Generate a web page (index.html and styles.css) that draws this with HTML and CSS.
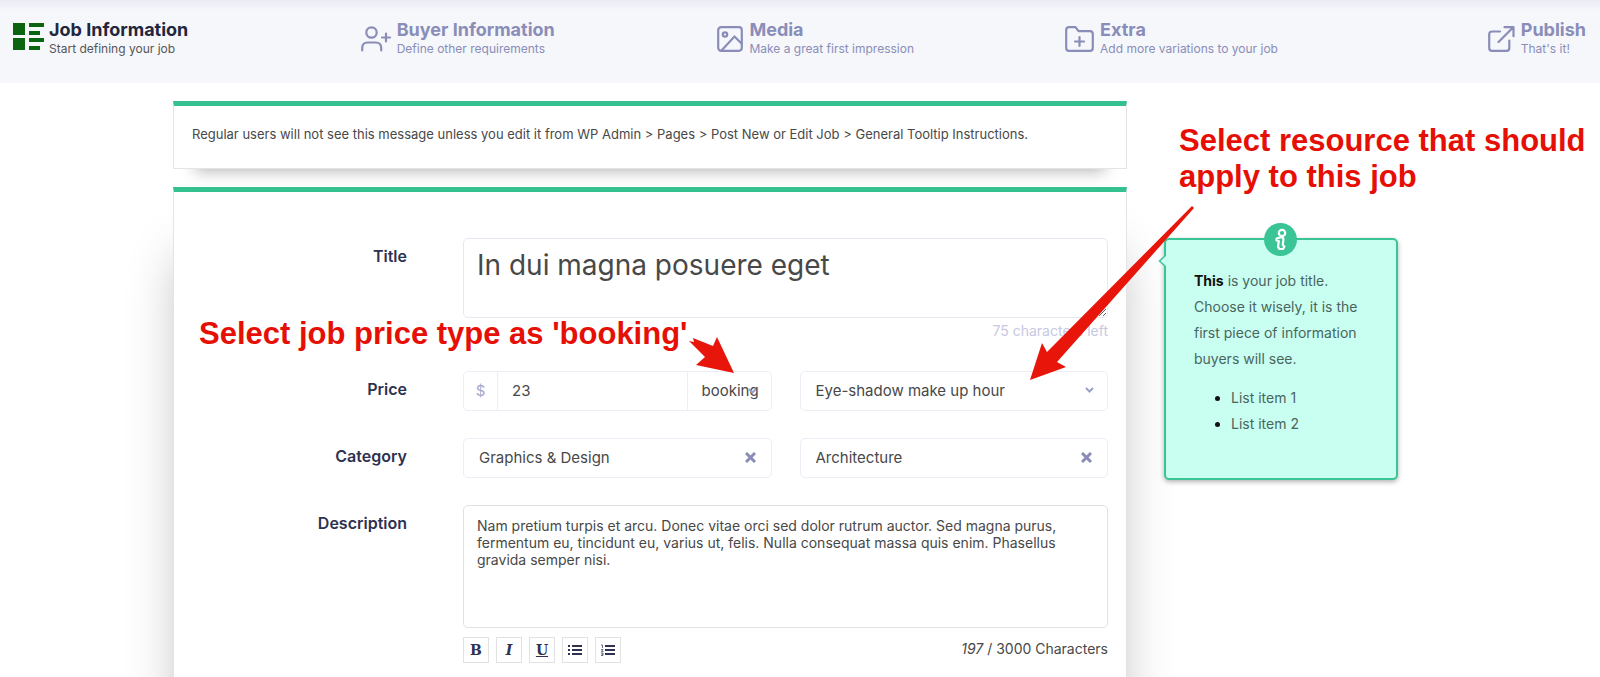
FILE: index.html
```html
<!DOCTYPE html>
<html lang="en">
<head>
<meta charset="utf-8">
<title>Post New Job</title>
<link rel="stylesheet" href="styles.css">
</head>
<body>
<header class="steps">
  <a class="step step-active" href="#job">
    <svg class="step-icon" width="31" height="27" viewBox="0 0 31 27" fill="#0b6410"><path d="M0 0h12v12H0zM0 15h12v12H0zM16 0h15v4H16zM16 8h11v4H16zM16 15h15v4H16zM16 23h11v4H16z"/></svg>
    <span class="step-text"><strong class="step-title">Job Information</strong><span class="step-sub">Start defining your job</span></span>
  </a>
  <a class="step" href="#buyer">
    <svg class="step-icon" width="30" height="26" viewBox="0 0 30 26" fill="none" stroke="#8a8db8" stroke-width="2.2" stroke-linecap="round"><circle cx="10.500" cy="6.500" r="5.200"/><path d="M1.200 24.500v-2.500q0-5.500 5.500-5.500h8q5.500 0 5.500 5.500v2.500M25 7.500v8M21 11.500h8"/></svg>
    <span class="step-text"><strong class="step-title">Buyer Information</strong><span class="step-sub">Define other requirements</span></span>
  </a>
  <a class="step" href="#media">
    <svg class="step-icon" width="26" height="26" viewBox="0 0 26 26" fill="none" stroke="#8a8db8" stroke-width="2.200" stroke-linecap="round" stroke-linejoin="round"><rect x="1.200" y="1.200" width="23.600" height="23.600" rx="3"/><circle cx="8" cy="8.500" r="2.200"/><path d="M4.500 24.500 17.500 10.500l7 7"/></svg>
    <span class="step-text"><strong class="step-title">Media</strong><span class="step-sub">Make a great first impression</span></span>
  </a>
  <a class="step" href="#extra">
    <svg class="step-icon" width="29" height="26" viewBox="0 0 29 26" fill="none" stroke="#8a8db8" stroke-width="2.200" stroke-linecap="round" stroke-linejoin="round"><path d="M1.200 22V4q0-2.800 2.800-2.800h6.500l3 4H25q2.800 0 2.800 2.800v14q0 2.800-2.800 2.800H4q-2.800 0-2.800-2.800zM14.500 11v9M10 15.500h9"/></svg>
    <span class="step-text"><strong class="step-title">Extra</strong><span class="step-sub">Add more variations to your job</span></span>
  </a>
  <a class="step" href="#publish">
    <svg class="step-icon" width="27" height="26" viewBox="0 0 27 26" fill="none" stroke="#8a8db8" stroke-width="2.200" stroke-linecap="round" stroke-linejoin="round"><path d="M12 5.500H4q-2.800 0-2.800 2.800V22q0 2.800 2.800 2.800h14.500q2.800 0 2.800-2.800v-7.500M10.500 16 25 1.500M16.500 1.200h9v9"/></svg>
    <span class="step-text"><strong class="step-title">Publish</strong><span class="step-sub">That's it!</span></span>
  </a>
</header>

<main class="layout">
  <div class="main-column">
    <section class="panel notice">
      <p class="notice-text">Regular users will not see this message unless you edit it from WP Admin &gt; Pages &gt; Post New or Edit Job &gt; General Tooltip Instructions.</p>
    </section>

    <form class="panel job-form">
      <div class="row row-title">
        <label class="row-label" for="title">Title</label>
        <div class="row-body">
          <textarea class="field title-field" id="title">In dui magna posuere eget</textarea>
          <p class="chars-left">75 characters left</p>
        </div>
      </div>

      <div class="row row-price">
        <label class="row-label" for="price">Price</label>
        <div class="row-body pair">
          <div class="price-group">
            <span class="currency">$</span>
            <input class="price-input" id="price" type="text" value="23">
            <span class="type-wrap">
              <select class="price-type" aria-label="Price type"><option>booking</option></select>
              <svg class="type-chevron" width="9" height="6" viewBox="0 0 9 6" fill="none" stroke="#9c9fc8" stroke-width="2"><path d="M1 1l3.500 3.500L8 1"/></svg>
            </span>
          </div>
          <div class="select-wrap">
            <select class="field select" aria-label="Resource"><option>Eye-shadow make up hour</option></select>
            <svg class="mark" width="9" height="6" viewBox="0 0 9 6" fill="none" stroke="#9c9fc8" stroke-width="2"><path d="M1 1l3.500 3.500L8 1"/></svg>
          </div>
        </div>
      </div>

      <div class="row row-category">
        <label class="row-label" for="category">Category</label>
        <div class="row-body pair">
          <div class="select-wrap">
            <select class="field select" id="category"><option>Graphics &amp; Design</option></select>
            <button class="mark clear" type="button" aria-label="Clear category"><svg width="11" height="11" viewBox="0 0 11 11" stroke="#8a8db8" stroke-width="3"><path d="M1 1l9 9M10 1l-9 9"/></svg></button>
          </div>
          <div class="select-wrap">
            <select class="field select" aria-label="Subcategory"><option>Architecture</option></select>
            <button class="mark clear" type="button" aria-label="Clear subcategory"><svg width="11" height="11" viewBox="0 0 11 11" stroke="#8a8db8" stroke-width="3"><path d="M1 1l9 9M10 1l-9 9"/></svg></button>
          </div>
        </div>
      </div>

      <div class="row row-description">
        <label class="row-label" for="description">Description</label>
        <div class="row-body">
          <textarea class="field description-field" id="description">Nam pretium turpis et arcu. Donec vitae orci sed dolor rutrum auctor. Sed magna purus, fermentum eu, tincidunt eu, varius ut, felis. Nulla consequat massa quis enim. Phasellus gravida semper nisi.</textarea>
          <div class="editor-foot">
            <div class="tools">
              <button class="tool" type="button"><b>B</b></button>
              <button class="tool" type="button"><i>I</i></button>
              <button class="tool" type="button"><u>U</u></button>
              <button class="tool" type="button" aria-label="Bulleted list"><svg width="14" height="12" viewBox="0 0 14 12" fill="#2e3150"><path d="M4 1h10v2H4zM4 5h10v2H4zM4 9h10v2H4zM0 1h2v2H0zM0 5h2v2H0zM0 9h2v2H0z"/></svg></button>
              <button class="tool" type="button" aria-label="Numbered list"><svg width="14" height="12" viewBox="0 0 14 12" fill="#2e3150"><path d="M4 1h10v2H4zM4 5h10v2H4zM4 9h10v2H4z"/><path d="M0 1h1.500v3M0 5.500h2L.5 7.500h2M0 9h2v2.500H0M.5 10.200H2" fill="none" stroke="#2e3150" stroke-width=".7"/></svg></button>
            </div>
            <span class="count"><em>197</em> / 3000 Characters</span>
          </div>
        </div>
      </div>
    </form>
  </div>

  <aside class="tip">
    <span class="tip-badge"><svg width="33" height="33" viewBox="0 0 33 33" fill="none" stroke="#fff" stroke-width="2.200" stroke-linejoin="round"><circle cx="18" cy="10" r="3.200"/><path d="M12.500 15.500 18 14l1.500 2-.8 6 1.800 1.500-1.500 2.500h-3.500l-1.500-2 .8-6-2.300-.5z"/></svg></span>
    <svg class="tip-pointer" width="8" height="14" viewBox="0 0 8 14"><path d="M8 1 1.500 7 8 13" fill="#c9fff0" stroke="#3bc495" stroke-width="1.500"/></svg>
    <p class="tip-text"><b>This</b> is your job title. Choose it wisely, it is the first piece of information buyers will see.</p>
    <ul class="tip-list"><li><span>List item 1</span></li><li><span>List item 2</span></li></ul>
  </aside>
</main>

<p class="note note-price">Select job price type as 'booking'</p>
<p class="note note-resource">Select resource that should<br>apply to this job</p>
<svg class="arrow arrow-price" width="46" height="38" viewBox="0 0 46 38" fill="#e8150b"><path d="M4 1l20 8L28 0l17 36-38-8 9-8L0 4l5 1z"/></svg>
<svg class="arrow arrow-resource" width="166" height="176" viewBox="0 0 166 176" fill="#e8150b"><path d="M162 0 17 146 12 137 0 174 36 161 27 156 164 2z"/></svg>
</body>
</html>
```
FILE: styles.css
```css
* { box-sizing: border-box; }

body {
  margin: 0;
  height: 100vh;
  overflow: hidden;
  position: relative;
  background: #fff;
  color: #484848;
  font: 15px/24px Inter, "Liberation Sans", sans-serif;
}

p, ul { margin: 0; }

textarea, input, select, button { font: inherit; color: inherit; }

.steps {
  display: grid;
  grid-template-columns: 348fr 357fr 348fr 423fr auto;
  padding: 20px 14px 25px 13px;
  background: linear-gradient(#ebebf5, #f5f7fb 10px);
}

.step { display: flex; gap: 6px; color: #8a8db8; text-decoration: none; }
.step-icon { margin-top: 6px; flex: none; }
.step-active { gap: 5px; }
.step-active .step-icon { margin-top: 3px; }
.step-text { display: flex; flex-direction: column; }
.step-title { font-size: 18px; line-height: 20px; font-weight: 700; }
.step-sub { font-size: 12px; line-height: 18px; }
.step-active .step-title { color: #23263b; }
.step-active .step-sub { color: #555; }

.layout {
  display: grid;
  grid-template-columns: 954fr 234fr 165fr;
  column-gap: 37px;
  align-items: start;
  padding-left: 173px;
}

.main-column { padding-top: 18px; }

.panel {
  border: 1px solid #e4e4e4;
  border-top: 5px solid #33c18f;
  background: #fff;
}

.notice { padding: 16px 18px 22px; font-size: 13px; box-shadow: 0 24px 16px -22px rgba(0, 0, 0, .3); }

.job-form {
  margin-top: 18px;
  padding: 46px 18px 40px;
  box-shadow: 0 60px 50px -10px rgba(0, 0, 0, .3);
}

.row { display: grid; grid-template-columns: 215px minmax(0, 1fr); column-gap: 56px; }
.row-label { padding-top: 6px; color: #2e3150; font-size: 16px; font-weight: 600; text-align: right; }
.row-price, .row-category, .row-description { margin-top: 27px; }

.field {
  display: block;
  width: 100%;
  border: 1px solid #e6e7f1;
  border-radius: 5px;
  background: #fff;
}

.title-field { height: 80px; padding: 6px 13px; font-size: 28px; line-height: 40px; }
.chars-left { text-align: right; color: #c7c8e2; font-size: 14px; line-height: 26px; }

.pair { display: grid; grid-template-columns: minmax(0, 1fr) minmax(0, 1fr); column-gap: 28px; }
.price-group { display: flex; border: 1px solid #eceef6; border-radius: 5px; height: 40px; }
.currency { width: 34px; border-right: 1px solid #eceef6; text-align: center; line-height: 38px; color: #a3a6cd; }
.price-input { flex: 1; min-width: 0; border: 0; padding: 0 14px; background: none; }
.type-wrap { position: relative; width: 84px; border-left: 1px solid #eceef6; }
.price-type { appearance: none; width: 100%; height: 100%; border: 0; padding: 0 0 0 14px; background: none; }
.type-chevron { position: absolute; right: 14px; top: 16px; }
.select-wrap { position: relative; }
.select { appearance: none; height: 40px; padding: 0 15px; border-color: #eceef6; }
.mark { position: absolute; right: 14px; top: 16px; }
.clear { top: 14px; right: 16px; padding: 0; border: 0; background: none; line-height: 0; }

.description-field { height: 123px; padding: 11px 13px; border-color: #e2e2e2; font-size: 14px; line-height: 17px; resize: none; }
.editor-foot { display: flex; justify-content: space-between; margin-top: 9px; }
.tools { display: flex; gap: 7px; }
.tool {
  display: flex;
  align-items: center;
  justify-content: center;
  width: 26px;
  height: 26px;
  padding: 0;
  border: 1px solid #e2e2e2;
  background: #fff;
  color: #2e3150;
  font: 700 14px/20px "DejaVu Serif", serif;
}
.count { font-size: 14px; }

.tip {
  position: relative;
  margin-top: 155px;
  padding: 28px 28px 41px;
  border: 2px solid #3bc495;
  border-radius: 5px;
  background: #c9fff0;
  color: #4a6560;
  font-size: 14px;
  line-height: 26px;
  box-shadow: 0 2px 5px rgba(0, 0, 0, .3);
}
.tip b { color: #111; }
.tip-badge { position: absolute; top: -17px; left: calc(50% - 17px); width: 33px; height: 33px; border-radius: 50%; background: #3bc495; }
.tip-badge svg { display: block; }
.tip-pointer { position: absolute; left: -8px; top: 14px; }
.tip-list { margin-top: 13px; padding-left: 37px; }
.tip-list li::marker { color: #111; }

.note { position: absolute; color: #e60f05; font: 700 31px/36px "Liberation Sans", Arial, sans-serif; white-space: nowrap; }
.note-price { left: 199px; top: 316px; }
.note-resource { left: 1179px; top: 123px; }
.arrow { position: absolute; }
.arrow-price { left: 689px; top: 337px; }
.arrow-resource { left: 1030px; top: 206px; }
```
